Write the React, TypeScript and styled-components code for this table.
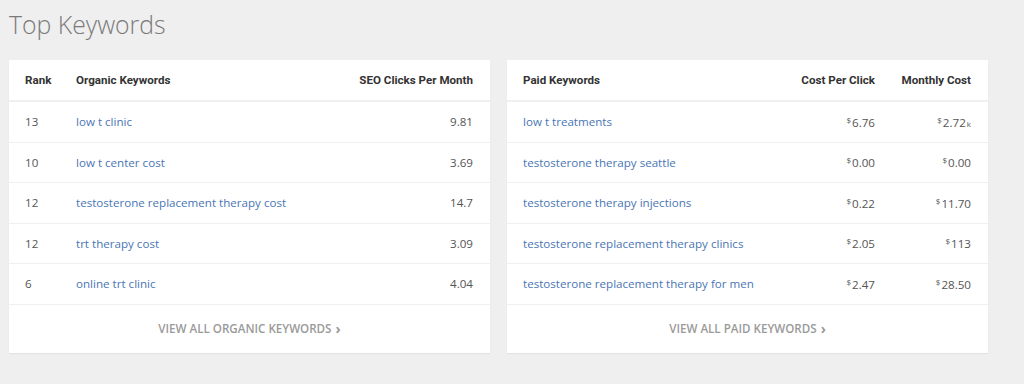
import * as React from "react";
import styled, { createGlobalStyle } from "styled-components";

const GlobalStyle = createGlobalStyle`
  body {
    margin: 0;
    background: #efefef;
    font-family: "Open Sans", "Liberation Sans", sans-serif;
  }
`;

const Page = styled.div`
  width: 1024px;
  height: 384px;
  padding: 7px 9px 0;
  box-sizing: border-box;
`;

const Title = styled.h1`
  margin: 0 0 19px;
  font-size: 24.8px;
  font-weight: 300;
  line-height: 34px;
  color: #7a7a7a;
`;

const Cards = styled.div`
  display: flex;
  gap: 17px;
  align-items: flex-start;
`;

const Card = styled.div`
  width: 481px;
  background: #fff;
  box-shadow: 0 1px 1px rgba(0, 0, 0, 0.05);
`;

const Row = styled.div<{ $cols: string; $head?: boolean }>`
  display: grid;
  grid-template-columns: ${({ $cols }) => $cols};
  align-items: center;
  height: ${({ $head }) => ($head ? "40px" : "39.5px")};
  padding: 0 17px 0 16px;
  border-bottom: ${({ $head }) => ($head ? "2px" : "1px")} solid #f0f0f0;
  font-size: 11.6px;
  color: #555;
`;

const Head = styled.span<{ $right?: boolean }>`
  font-family: Roboto, "Liberation Sans", sans-serif;
  font-weight: 700;
  font-size: 11.6px;
  color: #333;
  text-align: ${({ $right }) => ($right ? "right" : "left")};
`;

const Cell = styled.span<{ $right?: boolean }>`
  text-align: ${({ $right }) => ($right ? "right" : "left")};
  white-space: nowrap;
`;

const Link = styled.a`
  color: #4a76b4;
  text-decoration: none;
  white-space: nowrap;
`;

const Sup = styled.sup`
  font-size: 8px;
  vertical-align: 4px;
  margin-right: 1px;
`;

const Sub = styled.span`
  font-size: 8px;
  margin-left: 1px;
`;

const Footer = styled.div`
  height: 48px;
  display: flex;
  align-items: center;
  justify-content: center;
  font-size: 11.6px;
  font-weight: 600;
  color: #9a9a9a;
`;

const Chevron = styled.span`
  font-size: 14px;
  font-weight: 700;
  margin-left: 4px;
  line-height: 1;
`;

const organic = [
  ["13", "low t clinic", "9.81"],
  ["10", "low t center cost", "3.69"],
  ["12", "testosterone replacement therapy cost", "14.7"],
  ["12", "trt therapy cost", "3.09"],
  ["6", "online trt clinic", "4.04"],
];

const paid: [string, string, string, string?][] = [
  ["low t treatments", "6.76", "2.72", "k"],
  ["testosterone therapy seattle", "0.00", "0.00"],
  ["testosterone therapy injections", "0.22", "11.70"],
  ["testosterone replacement therapy clinics", "2.05", "113"],
  ["testosterone replacement therapy for men", "2.47", "28.50"],
];

const ORGANIC_COLS = "51px 1fr auto";
const PAID_COLS = "1fr 110px 96px";

function Money({ value, unit }: { value: string; unit?: string }) {
  return (
    <>
      <Sup>$</Sup>
      {value}
      {unit && <Sub>{unit}</Sub>}
    </>
  );
}

export default function App() {
  return (
    <Page>
      <GlobalStyle />
      <Title>Top Keywords</Title>
      <Cards>
        <Card>
          <Row $cols={ORGANIC_COLS} $head>
            <Head>Rank</Head>
            <Head>Organic Keywords</Head>
            <Head $right>SEO Clicks Per Month</Head>
          </Row>
          {organic.map(([rank, kw, clicks]) => (
            <Row $cols={ORGANIC_COLS} key={kw}>
              <Cell>{rank}</Cell>
              <Link href="#">{kw}</Link>
              <Cell $right>{clicks}</Cell>
            </Row>
          ))}
          <Footer>
            VIEW ALL ORGANIC KEYWORDS<Chevron>›</Chevron>
          </Footer>
        </Card>
        <Card>
          <Row $cols={PAID_COLS} $head>
            <Head>Paid Keywords</Head>
            <Head $right>Cost Per Click</Head>
            <Head $right>Monthly Cost</Head>
          </Row>
          {paid.map(([kw, cpc, monthly, unit]) => (
            <Row $cols={PAID_COLS} key={kw}>
              <Link href="#">{kw}</Link>
              <Cell $right>
                <Money value={cpc} />
              </Cell>
              <Cell $right>
                <Money value={monthly} unit={unit} />
              </Cell>
            </Row>
          ))}
          <Footer>
            VIEW ALL PAID KEYWORDS<Chevron>›</Chevron>
          </Footer>
        </Card>
      </Cards>
    </Page>
  );
}
